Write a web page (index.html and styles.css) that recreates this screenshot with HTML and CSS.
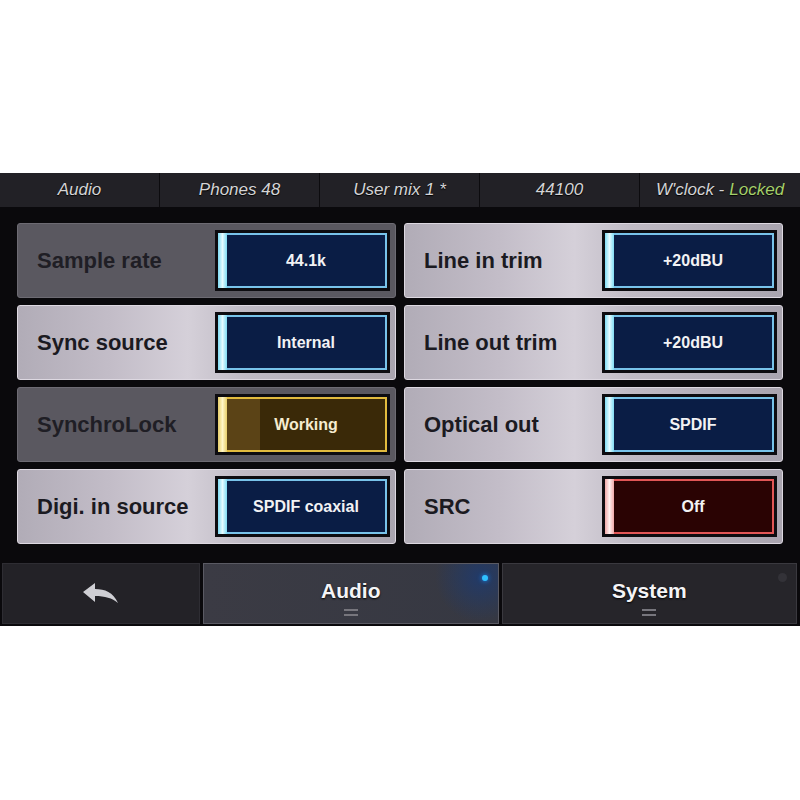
FILE: index.html
```html
<!DOCTYPE html>
<html lang="en">
<head>
    <meta charset="UTF-8">
    <meta name="viewport" content="width=device-width, initial-scale=1.0">
    <title>Audio Settings</title>
    <link rel="stylesheet" href="styles.css">
</head>
<body>
<div class="panel">
    <div class="status">
        <div class="seg">Audio</div>
        <div class="seg">Phones 48</div>
        <div class="seg">User mix 1 *</div>
        <div class="seg">44100</div>
        <div class="seg">W'clock - <span class="ok">Locked</span></div>
    </div>

    <div class="grid">
        <div class="cell dim">
            <span class="label">Sample rate</span>
            <div class="val blue"><div class="bar"></div><div class="inner">44.1k</div></div>
        </div>
        <div class="cell">
            <span class="label">Line in trim</span>
            <div class="val blue"><div class="bar"></div><div class="inner">+20dBU</div></div>
        </div>
        <div class="cell">
            <span class="label">Sync source</span>
            <div class="val blue"><div class="bar"></div><div class="inner">Internal</div></div>
        </div>
        <div class="cell">
            <span class="label">Line out trim</span>
            <div class="val blue"><div class="bar"></div><div class="inner">+20dBU</div></div>
        </div>
        <div class="cell dim">
            <span class="label">SynchroLock</span>
            <div class="val amber"><div class="bar"></div><div class="inner"><span class="progress"></span>Working</div></div>
        </div>
        <div class="cell">
            <span class="label">Optical out</span>
            <div class="val blue"><div class="bar"></div><div class="inner">SPDIF</div></div>
        </div>
        <div class="cell">
            <span class="label">Digi. in source</span>
            <div class="val blue"><div class="bar"></div><div class="inner">SPDIF coaxial</div></div>
        </div>
        <div class="cell">
            <span class="label">SRC</span>
            <div class="val red"><div class="bar"></div><div class="inner">Off</div></div>
        </div>
    </div>

    <div class="tabs">
        <div class="tab back">
            <svg width="38" height="24" viewBox="0 0 38 24">
                <path d="M1 10 L13 1 L13 7 C23 7 31 10 36 21 C30 16 23 14 13 14 L13 20 Z" fill="#cfcfd4"/>
            </svg>
        </div>
        <div class="tab active">
            <span class="dot"></span>
            <span class="tab-name">Audio</span>
            <span class="grip"></span>
        </div>
        <div class="tab">
            <span class="dot off"></span>
            <span class="tab-name">System</span>
            <span class="grip"></span>
        </div>
    </div>
</div>
</body>
</html>
```

FILE: styles.css
```css
body { margin: 0; background: #fff; font-family: "Liberation Sans", Arial, sans-serif; }

.panel { margin-top: 173px; height: 453px; background: #0a090c; display: flex; flex-direction: column; }

/* status strip */
.status { display: grid; grid-template-columns: repeat(5, 1fr); height: 34px; background: #222126; }
.seg { display: flex; align-items: center; justify-content: center; border-right: 1px solid #0c0b0e; font-size: 17px; font-style: italic; color: #d4d4d6; text-shadow: 0 1px 1px #000; }
.seg:last-child { border-right: none; }
.ok { color: #a5cf6a; margin-left: 5px; }

/* settings grid */
.grid { display: grid; grid-template-columns: 1fr 1fr; grid-auto-rows: 75px; column-gap: 8px; row-gap: 7px; padding: 16px 17px 0 17px; }
.cell { display: flex; align-items: center; justify-content: space-between; padding: 0 5px 0 19px; border: 1px solid #ddd8e1; border-radius: 3px; background: linear-gradient(to right, #b1acb7 0%, #c3bdc8 25%, #d5d0d9 45%, #c0bbc5 60%, #a9a4af 100%); }
.cell.dim { background: #5a5860; border-color: #6d6b73; }
.label { font-size: 22px; font-weight: bold; color: #1b1a21; }
.dim .label { color: #1f1e25; }

/* value boxes */
.val { width: 169px; height: 55px; border: 3px solid #0d0c10; display: flex; }
.bar { width: 9px; }
.inner { flex: 1; display: flex; align-items: center; justify-content: center; position: relative; font-size: 16px; font-weight: bold; color: #f2f2f4; border: 2px solid; border-left: none; }
.blue .bar { background: linear-gradient(to right, #7fdcf5, #e6fbff 50%, #7fdcf5); }
.blue .inner { background: #0a1d45; border-color: #78c3ea; }
.amber .bar { background: linear-gradient(to right, #e8cf6a, #fff6c8 50%, #e8cf6a); }
.amber .inner { background: #3a2908; border-color: #e2bb3e; color: #f6ecd0; z-index: 0; }
.progress { position: absolute; left: 0; top: 0; bottom: 0; width: 33px; background: #5b4316; z-index: -1; }
.red .bar { background: linear-gradient(to right, #f0a8a8, #fff0f0 50%, #f0a8a8); }
.red .inner { background: #2a0303; border-color: #e25656; }

/* bottom tabs */
.tabs { display: grid; grid-template-columns: 198px 1fr 1fr; gap: 3px; height: 61px; margin-top: 19px; padding: 0 3px 0 2px; }
.tab { position: relative; display: flex; flex-direction: column; align-items: center; justify-content: flex-end; padding-bottom: 7px; background: #26252a; border: 1px solid #3a393f; }
.tab.back { justify-content: center; padding-bottom: 0; background: #232227; border-color: #2e2d33; }
.tab.active { background: radial-gradient(circle 45px at 94% 22%, #223a68 0%, rgba(40, 52, 80, 0) 100%), linear-gradient(to right, #3b3b44, #363842); border-color: #5a5a63; }
.tab-name { font-size: 21px; font-weight: bold; color: #f4f4f6; line-height: 24px; text-shadow: 0 1px 2px #000; }
.grip { width: 14px; height: 7px; margin-top: 6px; border-top: 2px solid #77767d; border-bottom: 2px solid #77767d; box-sizing: border-box; }
.dot { position: absolute; top: 11px; right: 10px; width: 6px; height: 6px; border-radius: 50%; background: #2fc0ff; box-shadow: 0 0 5px #1a8cff; }
.dot.off { width: 9px; height: 9px; top: 9px; right: 9px; background: #333238; box-shadow: none; }
```
